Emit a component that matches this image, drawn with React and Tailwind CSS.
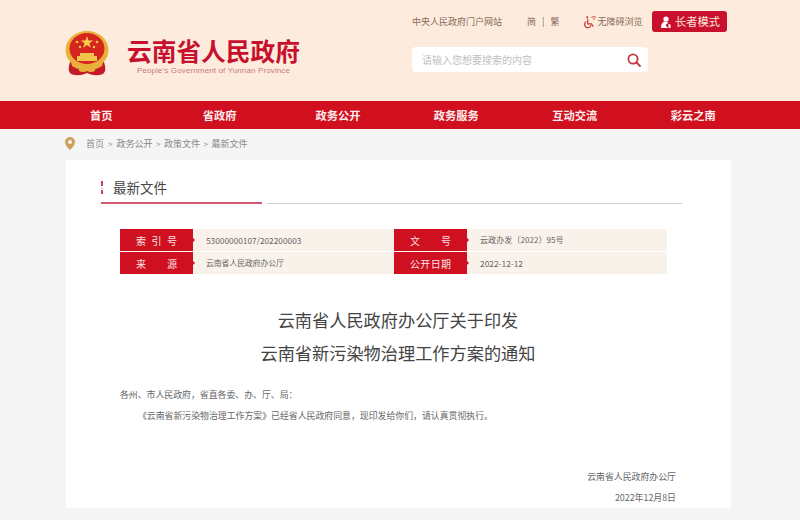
import React from "react";
const font = { fontFamily: '"Noto Sans CJK SC","Noto Sans",sans-serif' };

function Emblem() {
  return (
    <svg width="44" height="46" viewBox="0 0 44 46">
      <path d="M5 31 Q2 40 6 43 Q14 46 22 42 Q30 46 38 43 Q42 40 39 31 Z" fill="#c21a26" />
      <ellipse cx="22" cy="19" rx="21.500" ry="19" fill="#eab13a" />
      <ellipse cx="22" cy="17.500" rx="17.500" ry="15.500" fill="#d5251f" />
      <path d="M22 5l1.500 4.500h4.700l-3.800 2.800 1.400 4.500-3.800-2.800-3.800 2.800 1.400-4.500-3.800-2.800h4.700z" fill="#f4cf4a" />
      <circle cx="12" cy="11" r="1.300" fill="#f4cf4a" />
      <circle cx="32" cy="11" r="1.300" fill="#f4cf4a" />
      <circle cx="15" cy="16" r="1.200" fill="#f4cf4a" />
      <circle cx="29" cy="16" r="1.200" fill="#f4cf4a" />
      <path d="M15 22h14v3h3v5H12v-5h3z" fill="#f0c34c" />
      <path d="M6 31 Q22 41 38 31 L37 35 Q22 44 7 35 Z" fill="#eab13a" />
      <path d="M14 37q4 3 8 0q4 3 8 0v3q-4 2-8 0q-4 2-8 0z" fill="#eab13a" />
    </svg>
  );
}

function Label({ chars }) {
  return (
    <div className="relative w-[73px] shrink-0 bg-[#cf1020] text-[#fbe3e3] text-[10px] flex items-center justify-between px-[16px]">
      {chars.map((c, i) => <span key={i}>{c}</span>)}
      <span className="absolute right-[-2px] top-1/2 -translate-y-1/2 border-y-[2px] border-l-[2px] border-y-transparent border-l-[#cf1020]" />
    </div>
  );
}

function Row({ a, av, b, bv }) {
  return (
    <div className="flex h-[22px] bg-[#f9f2ea] text-[#666]">
      <Label chars={a} />
      <div className="w-[201px] pl-[13px] flex items-center">{av}</div>
      <Label chars={b} />
      <div className="flex-1 pl-[13px] flex items-center">{bv}</div>
    </div>
  );
}

export default function App() {
  const nav = ["首页", "省政府", "政务公开", "政务服务", "互动交流", "彩云之南"];
  return (
    <div style={font} className="w-[800px] h-[520px] overflow-hidden bg-[#f5f5f5]">
      <header className="h-[101px] bg-[#fdecdd] pl-[65px] pr-[72px] flex justify-between">
        <div className="flex items-start pt-[31px]">
          <Emblem />
          <div className="ml-[18px] flex flex-col items-start pt-[6px]">
            <div className="text-[24.700px] leading-[26px] font-bold text-[#c8102e]">云南省人民政府</div>
            <div className="ml-[10px] text-[8px] leading-[10px] mt-[3px] tracking-[0.13px] text-[#c9778a]" style={{ fontFamily: '"Liberation Sans",sans-serif' }}>People's Government of Yunnan Province</div>
          </div>
        </div>
        <div className="flex flex-col w-[316px] pt-[11px]">
          <div className="flex items-center h-[21px] text-[#8a6a5a] text-[9px]">
            <span className="w-[115px]">中央人民政府门户网站</span>
            <span>简</span>
            <span className="mx-[6px] text-[#5a7a5a]">|</span>
            <span>繁</span>
            <span className="ml-[25px]">
              <svg width="13" height="15" viewBox="0 0 14 15" fill="none" stroke="#c33" strokeWidth="1.300">
                <circle cx="3.500" cy="3" r="1.200" fill="#c33" stroke="none" />
                <path d="M4 5v5h4l2 3" />
                <path d="M2.500 7.500a3.500 3.500 0 1 0 5 4" />
                <path d="M8 3q2-1.500 5 0M9.500 5q1.200-.8 2.200 0" strokeWidth="1" />
              </svg>
            </span>
            <span>无障碍浏览</span>
            <div className="ml-[10px] w-[75px] h-[21px] rounded-[3px] bg-[#c9102c] text-[#fbe6dc] text-[11.250px] flex items-center justify-center gap-[4px]">
              <svg width="11" height="12" viewBox="0 0 11 12" fill="#fff">
                <circle cx="6" cy="3" r="2.600" />
                <path d="M1 12q0-6 4-6.500l3.500 1L5.500 9 8 12z" />
                <path d="M8.500 8l2 0.500 0 3.500-2 0z" />
              </svg>
              <span>长者模式</span>
            </div>
          </div>
          <div className="mt-[15px] h-[25px] w-[236px] bg-white rounded-[4px] flex items-center justify-between pl-[10px] pr-[7px] text-[#c0c0c0] text-[10px]">
            <span>请输入您想要搜索的内容</span>
            <svg width="14" height="14" viewBox="0 0 14 14" fill="none" stroke="#c23b45" strokeWidth="1.800" strokeLinecap="round">
              <circle cx="6" cy="6" r="4.600" />
              <path d="M9.500 9.500L13 13" />
            </svg>
          </div>
        </div>
      </header>

      <nav className="h-[28px] bg-[#d0101f] pl-[42px] flex items-center text-[#fdeeee] text-[11.250px] font-bold">
        {nav.map((n) => (
          <span key={n} className="w-[118.400px] text-center">{n}</span>
        ))}
      </nav>

      <div className="h-[29px] pl-[65px] flex items-center text-[9px] text-[#888]">
        <svg width="10" height="13" viewBox="0 0 10 13" className="mr-[11px]">
          <path fillRule="evenodd" d="M5 0a5 5 0 0 1 5 5c0 3-3 6-5 8-2-2-5-5-5-8a5 5 0 0 1 5-5zm0 3a2 2 0 1 0 0 4 2 2 0 0 0 0-4z" fill="#cda05c" />
        </svg>
        <span>首页</span>
        <span className="mx-[4px] text-[8px]">&gt;</span>
        <span>政务公开</span>
        <span className="mx-[3.500px] text-[8px]">&gt;</span>
        <span>政策文件</span>
        <span className="mx-[3.500px] text-[8px]">&gt;</span>
        <span>最新文件</span>
      </div>

      <main className="mt-[2px] ml-[66px] w-[665px] h-[348px] bg-white pt-[14px]">
        <div className="ml-[35px] w-[581px] flex flex-col">
          <div className="h-[27px] flex items-center text-[13.500px] text-[#444]">
            <span className="w-[2px] h-[13px] mr-[10px] flex flex-col justify-between">
              <span className="h-[5px] bg-[#c8405a]" />
              <span className="h-[1px] bg-[#e09aa8]" />
              <span className="h-[4px] bg-[#c8405a]" />
            </span>
            最新文件
          </div>
          <div className="flex items-center h-[2px] mt-[1px]">
            <div className="w-[161px] h-[2px] bg-[#cf5a70]" />
            <div className="ml-[5px] flex-1 h-[1px] bg-[#cfcfcf]" />
          </div>
        </div>
        <div className="ml-[54px] mr-[64px] mt-[25px] flex flex-col gap-[1px]">
          <Row
            a={["索", "引", "号"]}
            av={<span className="text-[8.300px]">53000000107/202200003</span>}
            b={["文", "号"]}
            bv={<span className="text-[8.100px]">云政办发〔2022〕95号</span>}
          />
          <Row
            a={["来", "源"]}
            av={<span className="text-[7.800px]">云南省人民政府办公厅</span>}
            b={["公", "开", "日", "期"]}
            bv={<span className="text-[8.400px]">2022-12-12</span>}
          />
        </div>
        <h1 className="mt-[29px] text-center text-[#444] text-[17.200px] leading-[33px] ml-[-1px]">
          <div>云南省人民政府办公厅关于印发</div>
          <div>云南省新污染物治理工作方案的通知</div>
        </h1>
        <div className="ml-[54px] mt-[15px] text-[8.900px] text-[#666] leading-[21px]">
          <div>各州、市人民政府，省直各委、办、厅、局：</div>
          <div className="pl-[18px]">《云南省新污染物治理工作方案》已经省人民政府同意，现印发给你们，请认真贯彻执行。</div>
        </div>
        <div className="mt-[40px] mr-[55px] text-right text-[8.900px] text-[#666] leading-[21px]">
          <div>云南省人民政府办公厅</div>
          <div>2022年12月8日</div>
        </div>
      </main>
    </div>
  );
}
